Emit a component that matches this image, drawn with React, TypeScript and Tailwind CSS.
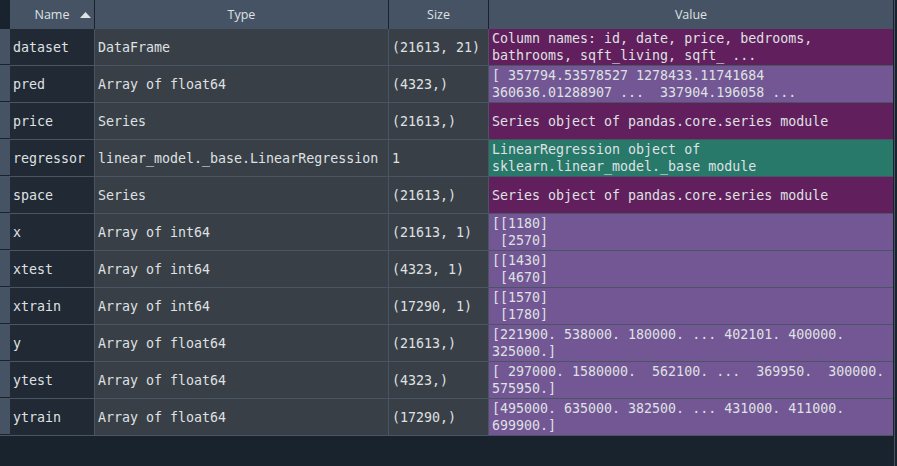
import React from 'react';

type Row = { name: string; type: string; size: string; value: string[]; tone: 'dark' | 'light' | 'green' };

const rows: Row[] = [
  { name: 'dataset', type: 'DataFrame', size: '(21613, 21)', value: ['Column names: id, date, price, bedrooms,', 'bathrooms, sqft_living, sqft_ ...'], tone: 'dark' },
  { name: 'pred', type: 'Array of float64', size: '(4323,)', value: ['[ 357794.53578527 1278433.11741684', '360636.01288907 ...  337904.196058 ...'], tone: 'light' },
  { name: 'price', type: 'Series', size: '(21613,)', value: ['Series object of pandas.core.series module'], tone: 'dark' },
  { name: 'regressor', type: 'linear_model._base.LinearRegression', size: '1', value: ['LinearRegression object of', 'sklearn.linear_model._base module'], tone: 'green' },
  { name: 'space', type: 'Series', size: '(21613,)', value: ['Series object of pandas.core.series module'], tone: 'dark' },
  { name: 'x', type: 'Array of int64', size: '(21613, 1)', value: ['[[1180]', ' [2570]'], tone: 'light' },
  { name: 'xtest', type: 'Array of int64', size: '(4323, 1)', value: ['[[1430]', ' [4670]'], tone: 'light' },
  { name: 'xtrain', type: 'Array of int64', size: '(17290, 1)', value: ['[[1570]', ' [1780]'], tone: 'light' },
  { name: 'y', type: 'Array of float64', size: '(21613,)', value: ['[221900. 538000. 180000. ... 402101. 400000.', '325000.]'], tone: 'light' },
  { name: 'ytest', type: 'Array of float64', size: '(4323,)', value: ['[ 297000. 1580000.  562100. ...  369950.  300000.', '575950.]'], tone: 'light' },
  { name: 'ytrain', type: 'Array of float64', size: '(17290,)', value: ['[495000. 635000. 382500. ... 431000. 411000.', '699900.]'], tone: 'light' },
];

const toneBg = {
  dark: 'bg-[#621f5d]',
  light: 'bg-[#725794]',
  green: 'bg-[#28796a]',
};

export default function App() {
  return (
    <div className="w-[897px] h-[466px] bg-[#19232d] flex overflow-hidden text-[#dfe1e2]">
      <div className="w-[893px] flex flex-col">
        {/* header */}
        <div className="grid grid-cols-[10px_85px_294px_100px_404px] h-[29px] text-[12.5px] font-['Open_Sans',sans-serif]">
          <div className="bg-[#19232d]" />
          <div className="relative bg-[#455364] border-r border-[#19232d] flex items-center justify-center pt-[2px]">
            <span>Name</span>
            <svg className="absolute right-[3px] top-[12px]" width="11" height="6" viewBox="0 0 11 6">
              <polygon points="0,6 11,6 5.5,0" fill="#dfe1e2" />
            </svg>
          </div>
          <div className="bg-[#455364] border-r border-[#19232d] flex items-center justify-center pt-[2px]">Type</div>
          <div className="bg-[#455364] border-r border-[#19232d] flex items-center justify-center pt-[2px]">Size</div>
          <div className="bg-[#455364] flex items-center justify-center pt-[2px]">Value</div>
        </div>
        {/* rows */}
        <div className="font-['DejaVu_Sans_Mono',monospace] text-[13.3px] leading-[17px]">
          {rows.map((r) => (
            <div key={r.name} className="grid grid-cols-[10px_85px_294px_100px_404px] h-[37px] border-b border-[#4a5564]">
              <div className="bg-[#455364] border-b border-[#19232d]" />
              <div className="bg-[#212934] border-r border-[#4a5564] flex items-center pl-[3px] whitespace-pre">{r.name}</div>
              <div className="bg-[#393f47] border-r border-[#4a5564] flex items-center pl-[3px] whitespace-pre">{r.type}</div>
              <div className="bg-[#393f47] border-r border-[#4a5564] flex items-center pl-[3px] whitespace-pre">{r.size}</div>
              <div className={`${toneBg[r.tone]} flex flex-col justify-center pl-[3px] whitespace-pre`}>
                {r.value.map((v, i) => (
                  <div key={i}>{v}</div>
                ))}
              </div>
            </div>
          ))}
        </div>
      </div>
      <div className="w-[4px] flex">
        <div className="w-[1px] bg-[#19232d]" />
        <div className="w-[1px] bg-[#455364]" />
        <div className="flex-1 bg-[#19232d]" />
      </div>
    </div>
  );
}
